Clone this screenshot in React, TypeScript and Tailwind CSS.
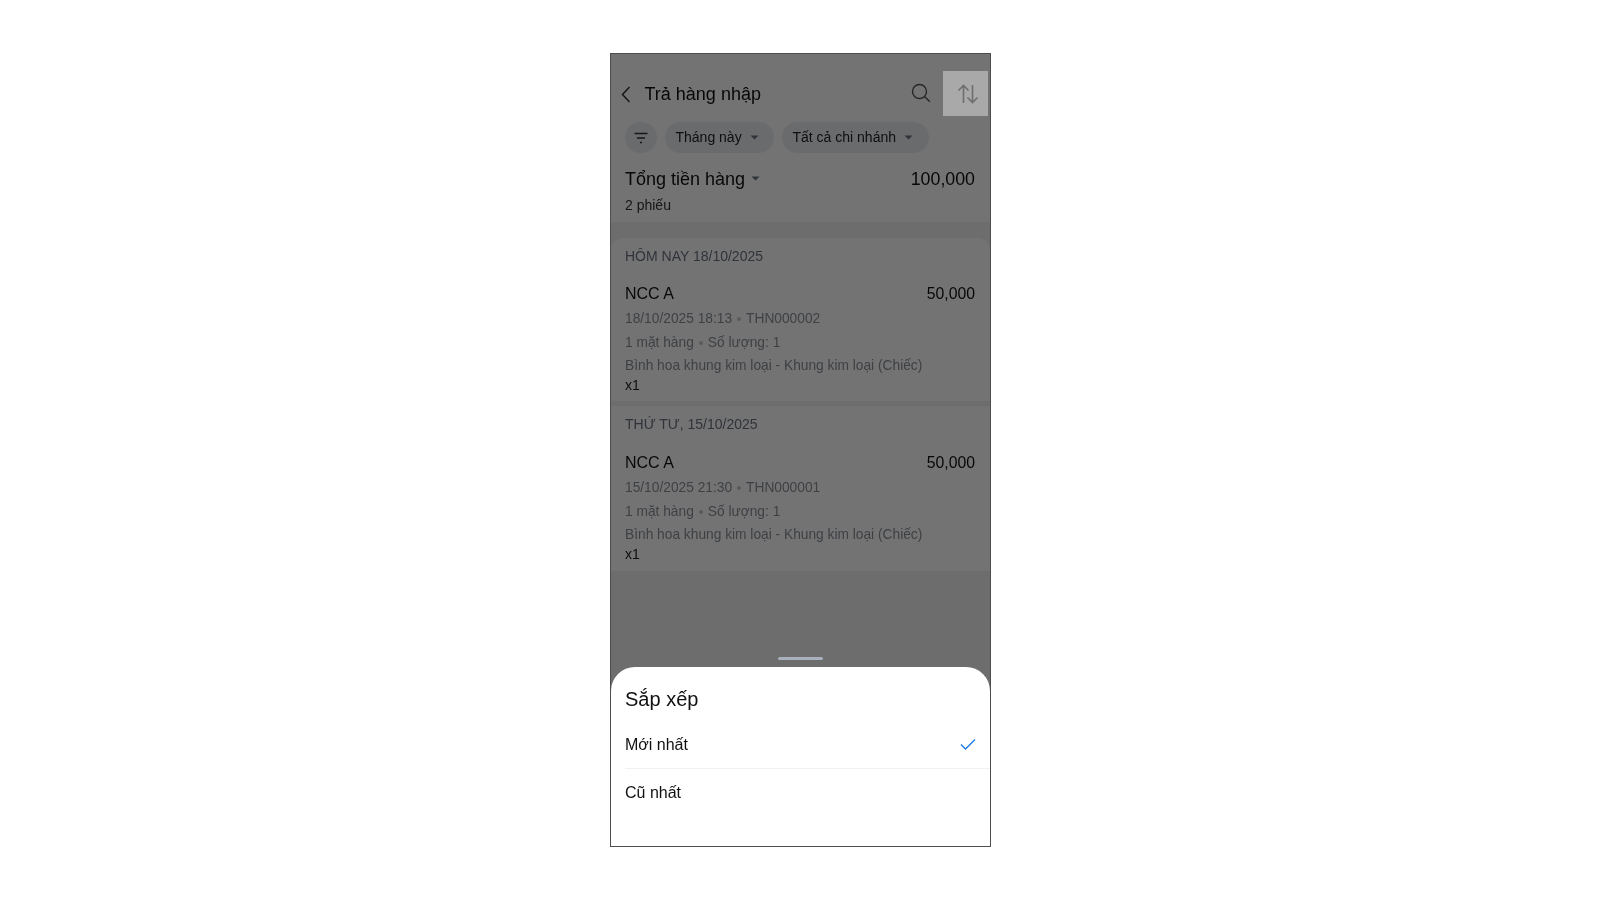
import React from "react";

const Caret = ({ className = "" }: { className?: string }) => (
  <svg width="9" height="5" viewBox="0 0 9 5" className={className}>
    <path d="M0.5 0.5h8L4.500 4.500z" fill="#6b7280" />
  </svg>
);

const Dot = () => <span className="mx-[5px] inline-block h-[4px] w-[4px] rounded-full bg-[#c4c8ce] align-middle" />;

function Card({ heading, date, code, top }: { heading: string; date: string; code: string; top?: boolean }) {
  return (
    <section className={`bg-white px-[14.5px] ${top ? "h-[163px] rounded-t-[12px]" : "h-[165px]"}`}>
      <div className={`flex items-center pt-[1px] text-[14px] text-[#6b7280] ${top ? "h-[35px]" : "h-[36px]"}`}>{heading}</div>
      <div className="mt-[11px] flex h-[20px] items-center justify-between text-[16px] text-[#111]">
        <span>NCC A</span>
        <span className="text-[15.8px]">50,000</span>
      </div>
      <div className="mt-[6px] flex h-[18px] items-center text-[13.75px] text-[#8a8f98]">
        {date}
        <Dot />
        {code}
      </div>
      <div className="mt-[6px] flex h-[18px] items-center text-[13.75px] text-[#8a8f98]">
        1 mặt hàng
        <Dot />
        Số lượng: 1
      </div>
      <div className="mt-[5px] flex h-[18px] items-center text-[13.75px] text-[#8a8f98]">
        Bình hoa khung kim loại - Khung kim loại (Chiếc)
      </div>
      <div className="mt-[1px] flex h-[18px] items-center text-[14px] text-[#222]">x1</div>
    </section>
  );
}

export default function App() {
  return (
    <div className="flex h-[900px] w-full justify-center bg-white pt-[53px] font-['Liberation_Sans',Arial,sans-serif]">
      <div className="relative h-[794px] w-[381px] overflow-hidden border border-[#4d4d4d] bg-[#f1f2f4] blur-[0.35px]">
        <div className="bg-white pb-[8px]">
          <header className="flex h-[68px] items-end px-[9px] pb-[15px]">
            <svg width="14" height="20" viewBox="0 0 14 20" fill="none" stroke="#333" strokeWidth="1.5" className="mb-[3px] mr-[11px]">
              <path d="M9.500 3 2.500 10.500l7 7.500" />
            </svg>
            <h1 className="flex-1 text-[18px] leading-[26px] text-[#111]">Trả hàng nhập</h1>
            <svg width="22" height="22" viewBox="0 0 22 22" fill="none" stroke="#555" strokeWidth="1.4" className="mb-[3px] mr-[49px]">
              <circle cx="9.500" cy="9.500" r="7" />
              <path d="m14.800 14.800 5 5" />
            </svg>
          </header>
          <div className="flex h-[31px] items-center gap-[8px] px-[14px]">
            <div className="flex h-[31px] w-[32px] items-center justify-center rounded-full bg-[#eceef1]">
              <svg width="14" height="12" viewBox="0 0 14 12" fill="none" stroke="#333" strokeWidth="1.4">
                <path d="M0.500 1.500h13M3 6h8M6 10.500h2" />
              </svg>
            </div>
            <div className="flex h-[31px] w-[109px] items-center gap-[8px] rounded-full bg-[#eceef1] pl-[11px] text-[14px] text-[#222]">
              Tháng này
              <Caret />
            </div>
            <div className="flex h-[31px] w-[147px] items-center gap-[8px] rounded-full bg-[#eceef1] pl-[11px] text-[14px] text-[#222]">
              Tất cả chi nhánh
              <Caret />
            </div>
          </div>
          <div className="mt-[14px] flex h-[24px] items-center justify-between px-[14.5px] text-[18px] text-[#111]">
            <span className="flex items-center gap-[6px]">
              Tổng tiền hàng
              <Caret className="mb-[2px]" />
            </span>
            <span className="text-[17.8px]">100,000</span>
          </div>
          <div className="mt-[5px] flex h-[18px] items-center px-[14.5px] text-[14px] text-[#333]">2 phiếu</div>
        </div>
        <div className="mt-[16px] flex flex-col gap-[5px]">
          <Card top heading="HÔM NAY 18/10/2025" date="18/10/2025 18:13" code="THN000002" />
          <Card heading="THỨ TƯ, 15/10/2025" date="15/10/2025 21:30" code="THN000001" />
        </div>

        <div className="absolute inset-0 bg-black/55" />

        <div className="absolute right-[2px] top-[17px] flex h-[45px] w-[45px] items-center justify-center bg-[#a9a9a9]">
          <svg width="22" height="22" viewBox="0 0 22 22" fill="none" stroke="#6e6e6e" strokeWidth="1.6" className="ml-[6px]">
            <path d="M6.500 20V2.500M1.500 7.500l5-5 5 5M15.500 2v17.500M10.500 14.500l5 5 5-5" />
          </svg>
        </div>

        <div className="absolute bottom-[186px] left-[167px] h-[3px] w-[45px] rounded-full bg-[#a8b0bb]" />

        <div className="absolute inset-x-0 bottom-0 h-[179px] rounded-t-[24px] bg-white pl-[14.5px]">
          <h2 className="mt-[20px] flex h-[24px] items-center text-[20px] text-[#111]">Sắp xếp</h2>
          <div className="mt-[22px] flex h-[24px] items-center justify-between pr-[13.5px] text-[16px] text-[#111]">
            Mới nhất
            <svg width="16" height="13" viewBox="0 0 16 13" fill="none" stroke="#1e7be6" strokeWidth="1.4" className="mb-[2px]">
              <path d="M1 6.500 5.500 11 15 1.500" />
            </svg>
          </div>
          <div className="mt-[11px] h-px bg-[#f0f1f3]" />
          <div className="mt-[12px] flex h-[24px] items-center text-[16px] text-[#111]">Cũ nhất</div>
        </div>
      </div>
    </div>
  );
}
